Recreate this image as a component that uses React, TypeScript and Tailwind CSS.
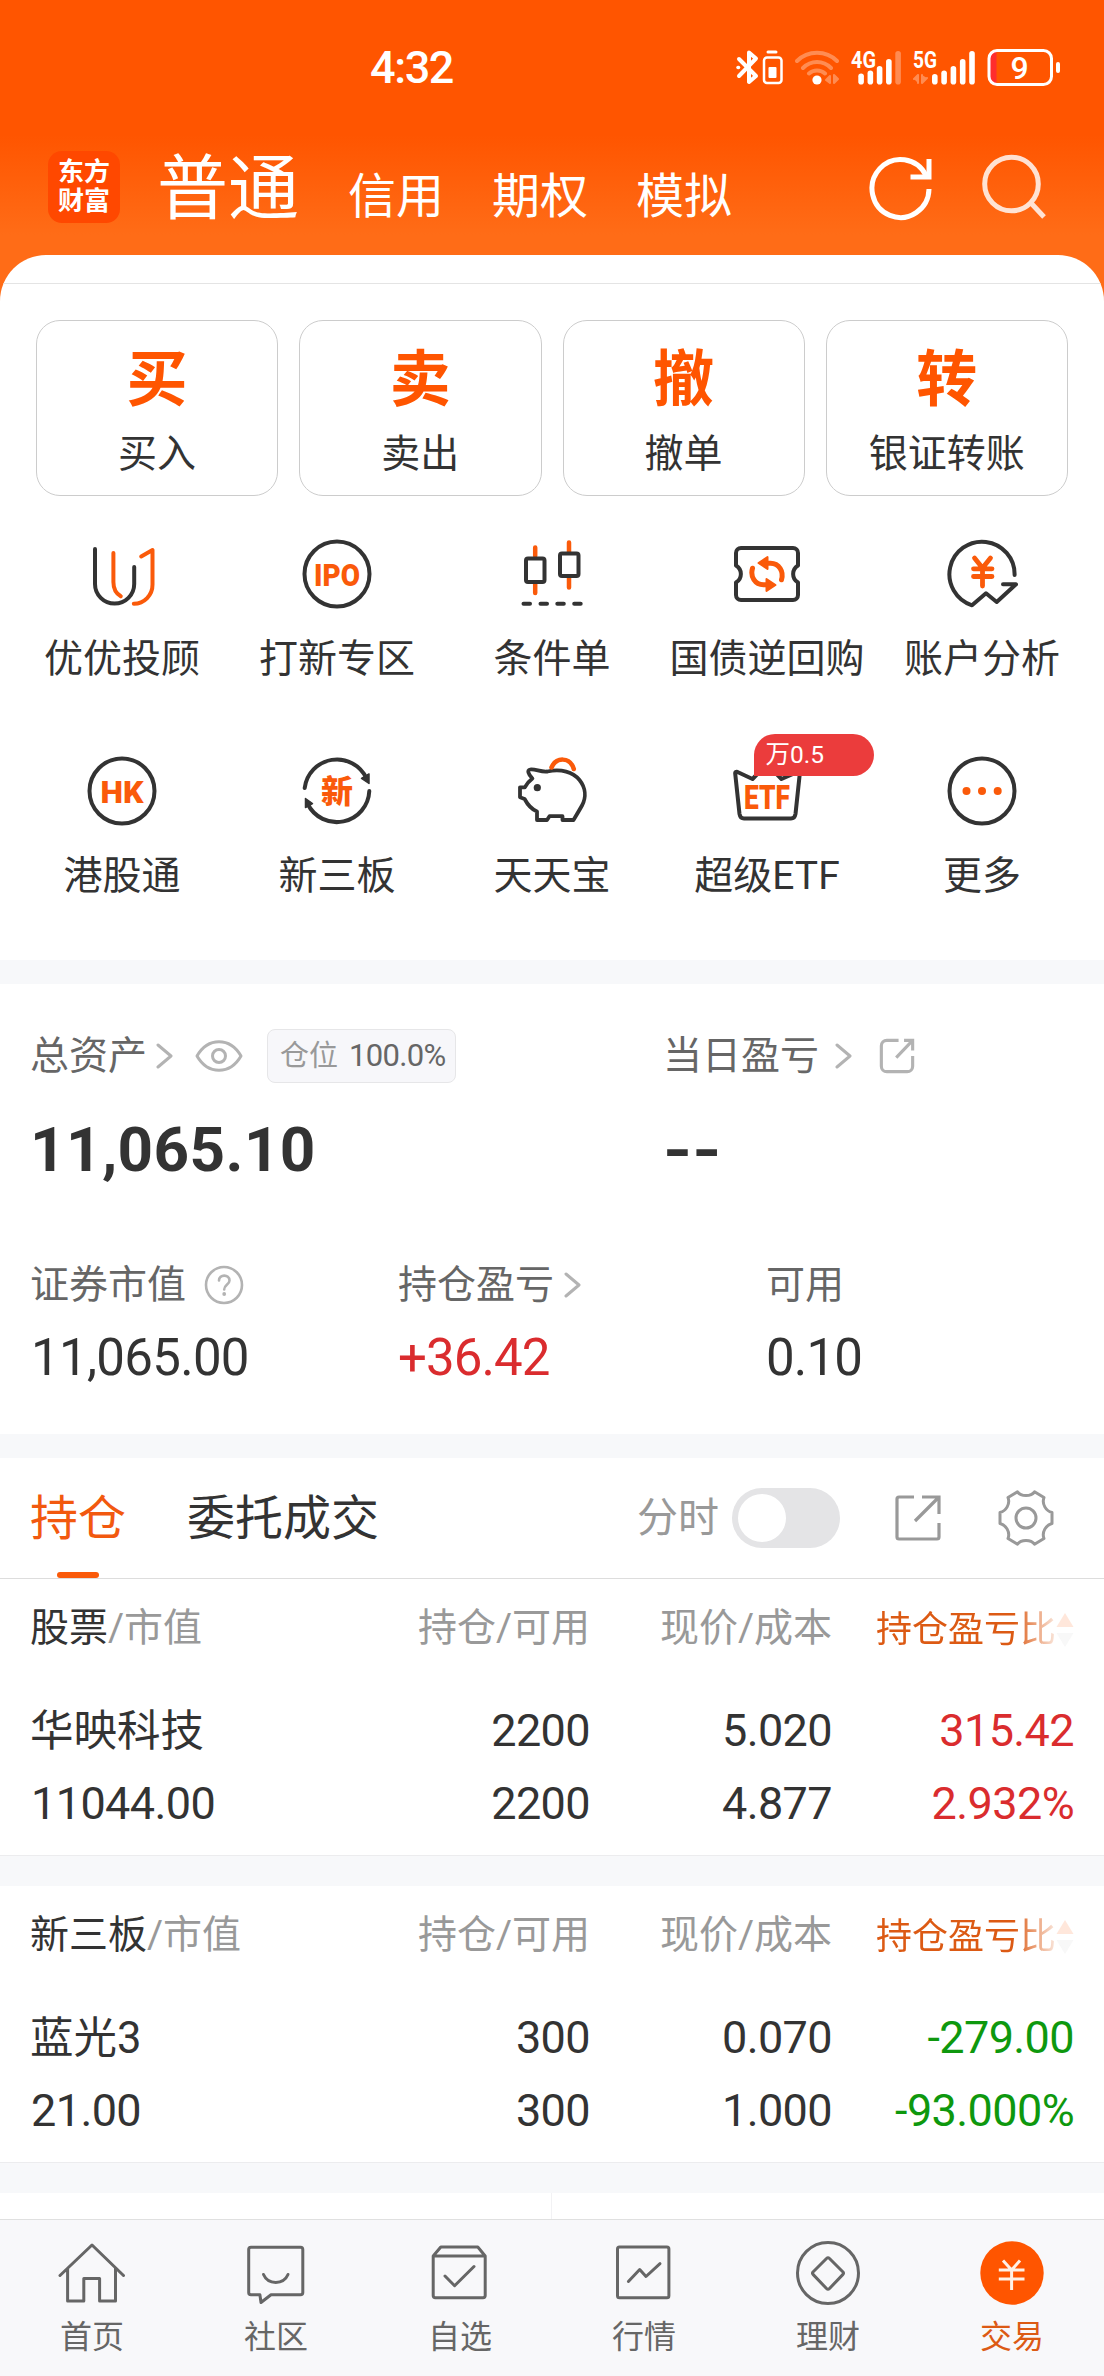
import type { ReactNode } from 'react';

const DARK = '#333333';
const ORANGE = '#fa5a0a';

interface IconProps {
  children: ReactNode;
  color?: string;
  width?: number;
}

function Icon({ children, color = DARK, width = 4 }: IconProps) {
  return (
    <svg
      width="72"
      height="72"
      viewBox="0 0 72 72"
      fill="none"
      stroke={color}
      strokeWidth={width}
      strokeLinecap="round"
      strokeLinejoin="round"
    >
      {children}
    </svg>
  );
}

function IconText({ children, y, size, length }: { children: string; y: number; size: number; length: number }) {
  return (
    <text
      x="36"
      y={y}
      textAnchor="middle"
      fontSize={size}
      fontWeight="900"
      textLength={length}
      lengthAdjust="spacingAndGlyphs"
      fill={ORANGE}
      stroke="none"
    >
      {children}
    </text>
  );
}

function Chevron() {
  return (
    <svg width="17" height="28" viewBox="0 0 17 28" fill="none" stroke="#b3b3b3" strokeWidth="3" strokeLinecap="round" strokeLinejoin="round">
      <path d="M2 3l13 11L2 25" />
    </svg>
  );
}

function ShareIcon({ size, color, rounded }: { size: number; color: string; rounded?: boolean }) {
  return (
    <svg width={size} height={size} viewBox="0 0 46 46" fill="none" stroke={color} strokeWidth={rounded ? 4 : 3.2}>
      <path
        d={
          rounded
            ? 'M25 3H10a7 7 0 0 0-7 7v26a7 7 0 0 0 7 7h26a7 7 0 0 0 7-7V23M32 3h11v13M43 3L22 25'
            : 'M19 2H4a2 2 0 0 0-2 2v38a2 2 0 0 0 2 2h38a2 2 0 0 0 2-2V28M27 2h17v17M44 2L20 26'
        }
      />
    </svg>
  );
}

const actions = [
  { glyph: '买', label: '买入' },
  { glyph: '卖', label: '卖出' },
  { glyph: '撤', label: '撤单' },
  { glyph: '转', label: '银证转账' },
];

const shortcuts: { label: string; badge?: string; icon: ReactNode }[] = [
  {
    label: '优优投顾',
    icon: (
      <Icon>
        <path d="M9 11V46A19.6 19.6 0 0 0 48.2 46V29" />
        <path stroke={ORANGE} d="M27.4 15V44C27.4 51 30 55.5 34.8 58.3M55.2 18.5L66.5 12V46.5A19 19 0 0 1 47.8 65.8" />
      </Icon>
    ),
  },
  {
    label: '打新专区',
    icon: (
      <Icon>
        <circle cx="36" cy="36" r="32.5" />
        <IconText y={47.5} size={32} length={46}>IPO</IconText>
      </Icon>
    ),
  },
  {
    label: '条件单',
    icon: (
      <Icon>
        <path stroke={ORANGE} strokeWidth="4.5" d="M19.2 9.5V18M19.2 46v9M53 4.5V14M53 40v9.5" />
        <rect x="10" y="20.5" width="18.5" height="23.5" rx="2" />
        <rect x="44" y="15.5" width="18.5" height="22.5" rx="2" />
        <path d="M7.5 65.7h6.5M24.5 65.7h6.5M41.3 65.7h6.5M58.2 65.7h6.5" />
      </Icon>
    ),
  },
  {
    label: '国债逆回购',
    icon: (
      <Icon>
        <path d="M5 15a5 5 0 0 1 5-5H62a5 5 0 0 1 5 5V27.5c-6.5 4-6.5 13 0 17V57a5 5 0 0 1-5 5H10a5 5 0 0 1-5-5V44.5c6.5-4 6.5-13 0-17Z" />
        <g stroke={ORANGE} strokeWidth="5">
          <path d="M36 25.3h3.5c8.5 0 13.5 8 11 16.5" />
          <path d="M36 46.7h-3.5c-8.5 0-13.5-8-11-16.5" />
          <path strokeWidth="2" fill={ORANGE} d="M27.5 25L36.5 19V31Z" />
          <path strokeWidth="2" fill={ORANGE} d="M44.5 47L35.5 53V41Z" />
        </g>
      </Icon>
    ),
  },
  {
    label: '账户分析',
    icon: (
      <Icon>
        <path d="M68.6 37A32.6 32.6 0 1 0 26 67.3L40 55.3L50.7 64L70 46.3H57" />
        <path stroke={ORANGE} strokeWidth="4.8" d="M28.5 20L36.5 30L44.5 20M36.5 31V48M27.5 30.8H46M27.5 38.5H46" />
      </Icon>
    ),
  },
  {
    label: '港股通',
    icon: (
      <Icon>
        <circle cx="36" cy="36" r="32.5" />
        <IconText y={47.5} size={32} length={43}>HK</IconText>
      </Icon>
    ),
  },
  {
    label: '新三板',
    icon: (
      <Icon>
        <path d="M3.7 33A32.5 32.5 0 0 1 65.3 23M68.3 36A32.5 32.5 0 0 1 6.7 49" />
        <path strokeWidth="1.5" fill={DARK} d="M60.5 23.5L68 19V28.5ZM4.5 43.5V52.5L11.5 48.5Z" />
        <text x="36" y="47.5" textAnchor="middle" fontSize="32" fontWeight="900" fill={ORANGE} stroke="none">
          新
        </text>
      </Icon>
    ),
  },
  {
    label: '天天宝',
    icon: (
      <Icon width={3.8}>
        <path d="M16.4 23.5C12 19 11 15 14 14.5C19 13.5 25 17.5 31.5 16.5C45 13.5 57 17 63.5 25C69.5 32.5 70.5 42 66 50.5C63.5 55 60.5 60 57.5 65H46.5V61.2H33.5L31 65H21V56.5C15 54 11.5 49.5 8.6 44L4 42.3V32.3H8.8C10.5 29 12.5 26.5 16.4 23.5Z" />
        <circle cx="21.3" cy="32.7" r="3.6" fill={DARK} stroke="none" />
        <path stroke={ORANGE} strokeWidth="4.5" d="M35.5 12.5C40 2 54 1.5 57.8 14" />
      </Icon>
    ),
  },
  {
    label: '超级ETF',
    badge: '万0.5',
    icon: (
      <Icon>
        <path d="M4.2 18.5C4 17 5 16.5 6.5 17L21.5 24L36 9L50.5 24L66.5 17C68 16.5 69 17 68.8 18.5L64.5 59C64 62 62.5 63.5 60 63.5H13C10.5 63.5 9 62 8.5 59Z" />
        <IconText y={54} size={33} length={46}>ETF</IconText>
      </Icon>
    ),
  },
  {
    label: '更多',
    icon: (
      <Icon>
        <circle cx="36" cy="36" r="32.5" />
        <g fill={ORANGE} stroke="none">
          <circle cx="20.5" cy="36" r="4" />
          <circle cx="36" cy="36" r="4" />
          <circle cx="51.7" cy="36" r="4" />
        </g>
      </Icon>
    ),
  },
];

const holdings = [
  {
    market: '股票',
    name: '华映科技',
    value: '11044.00',
    held: '2200',
    available: '2200',
    price: '5.020',
    cost: '4.877',
    profit: '315.42',
    ratio: '2.932%',
    color: 'text-[#da2c2e]',
  },
  {
    market: '新三板',
    name: '蓝光3',
    value: '21.00',
    held: '300',
    available: '300',
    price: '0.070',
    cost: '1.000',
    profit: '-279.00',
    ratio: '-93.000%',
    color: 'text-[#0e980e]',
  },
];

const navItems: { label: string; icon: ReactNode; active?: boolean }[] = [
  {
    label: '首页',
    icon: <path d="M4 38.5L36 8L67.5 38.5M11.6 31.5V64H27.8V41.5H43.6V64H59.5V31.5" />,
  },
  {
    label: '社区',
    icon: (
      <>
        <path d="M11 10.3H60.5a2.3 2.3 0 0 1 2.3 2.3V55.4a2.3 2.3 0 0 1-2.3 2.3H31L21 65.5L19.9 57.7H11a2.3 2.3 0 0 1-2.3-2.3V12.6A2.3 2.3 0 0 1 11 10.3Z" />
        <path d="M23.5 37.5C28 48 43.5 48 48 37.5" />
      </>
    ),
  },
  {
    label: '自选',
    icon: <path d="M9.2 19L16.8 10H53.8L61.2 19V58.5a2.2 2.2 0 0 1-2.2 2.2H11.4a2.2 2.2 0 0 1-2.2-2.2ZM9.2 19H61.2M21 39L30.6 48.7L50 29.5" />,
  },
  {
    label: '行情',
    icon: (
      <>
        <rect x="9.5" y="10" width="51.4" height="50.7" rx="2" />
        <path d="M20.4 44.5L31.7 32.5L38 39.5L52 26.7" />
      </>
    ),
  },
  {
    label: '理财',
    icon: (
      <>
        <circle cx="36" cy="36" r="30.5" />
        <path d="M34.5 21.5Q36 20 37.5 21.5L51 35Q52 36.2 51 37.4L37.5 51.5Q36 53 34.5 51.5L21 37.4Q20 36.2 21 35Z" />
      </>
    ),
  },
  {
    label: '交易',
    active: true,
    icon: (
      <>
        <circle cx="36" cy="36" r="31.7" fill="#ff5500" stroke="none" />
        <path stroke="#fff1e6" d="M27 23.5L35.6 33L44 23.5M35.6 33V53M22.8 33H48.5M22.8 42H48.5" strokeLinecap="butt" />
      </>
    ),
  },
];

function StatusBar() {
  const bars4g = [73.5, 70.5, 66, 59, 51];
  const bars5g = [74, 70.5, 66, 59, 51];
  return (
    <div className="flex h-[135px] items-start pl-[370px] pt-[45px] text-white">
      <span className="w-[360px] text-[45px] font-medium leading-[46px] tracking-[-1.4px]">4:32</span>
      <svg width="336" height="46" viewBox="730 45 336 46" fill="none" stroke="white" strokeLinecap="round" strokeLinejoin="round">
        <path strokeWidth="4" d="M739 59L756 76L749 82V52.5L756 58.5L739 76" />
        <path strokeWidth="3.5" d="M738 67.5h.5" />
        <path strokeWidth="3" d="M768 52h8" />
        <rect x="764" y="57.5" width="17.5" height="25.5" rx="3" strokeWidth="2.5" />
        <rect x="768.5" y="67" width="8" height="11" rx="1" fill="white" stroke="none" />
        <g strokeWidth="4" opacity="0.32">
          <path d="M797 61C808 50 826 50 837 61M803 68C811 60 823 60 831 68M809 73.5C813.5 69.5 820.5 69.5 825 73.5" />
          <path strokeWidth="2" fill="white" d="M826 80l4-4v7ZM838 79l-4-4v8Z" />
        </g>
        <circle cx="817" cy="80" r="4.6" fill="white" stroke="none" />
        <g fill="white" stroke="none" fontSize="24" fontWeight="700">
          <text x="851" y="68" textLength="25" lengthAdjust="spacingAndGlyphs">4G</text>
          <text x="913" y="68" textLength="24" lengthAdjust="spacingAndGlyphs">5G</text>
        </g>
        <g fill="white" stroke="none">
          {bars4g.map((top, i) => (
            <rect key={i} x={858.3 + i * 9.25} y={top} width="5.6" height={84.5 - top} rx="2.8" opacity={i === 4 ? 0.32 : 1} />
          ))}
          {bars5g.map((top, i) => (
            <rect key={i} x={932 + i * 9.3} y={top} width="5.6" height={84.5 - top} rx="2.8" />
          ))}
        </g>
        <path strokeWidth="2" opacity="0.32" fill="white" d="M914 79l4-4v8M922 75v8l5-5" />
        <path fill="#ff2d2d" stroke="none" d="M996.5 51.5h-1a6 6 0 0 0-6 6v20a6 6 0 0 0 6 6h1Z" />
        <rect x="989" y="50.5" width="62.5" height="34" rx="8" strokeWidth="3" />
        <path strokeWidth="4" d="M1058 64v7" />
        <text x="1019.5" y="79" textAnchor="middle" fontSize="32" fontWeight="500" fill="white" stroke="none">
          9
        </text>
      </svg>
    </div>
  );
}

function Header() {
  return (
    <header className="h-[255px] bg-[linear-gradient(180deg,#ff5500_0px,#ff5500_135px,#ff6c17_235px,#ff6c17_255px)] text-white">
      <StatusBar />
      <div className="flex h-[104px] items-center pl-12">
        <div className="flex h-[72px] w-[72px] flex-col items-center justify-center rounded-[14px] bg-[#ff4800] text-[26px] font-bold leading-[29px]">
          <span>东方</span>
          <span>财富</span>
        </div>
        <div className="ml-[37px] flex w-[712px] items-baseline pt-[12px] text-[48px] leading-[72px]">
          <span className="mr-[49px] text-[71px]">普通</span>
          <span className="mr-12">信用</span>
          <span className="mr-12">期权</span>
          <span>模拟</span>
        </div>
        <svg width="180" height="70" viewBox="868 152 180 70" fill="none" stroke="white" strokeWidth="5">
          <path d="M928 189A28.5 29 0 1 1 925 175.5" />
          <path d="M928 159V177H909.5" />
          <g opacity="0.82">
            <circle cx="1010.5" cy="184" r="26.8" />
            <path d="M1030 203L1043 217" />
          </g>
        </svg>
      </div>
    </header>
  );
}

function QuickActions() {
  return (
    <div className="bg-[#ff6c17]">
      <section className="h-[705px] overflow-hidden rounded-t-[46px] bg-white pt-7">
        <div className="h-px bg-[#e4e4e4]" />
        <div className="mt-9 grid grid-cols-4 gap-[21px] px-9">
          {actions.map((item) => (
            <div key={item.label} className="flex h-44 flex-col items-center rounded-[24px] border border-[#cccccc] pt-[29px]">
              <span className="text-[61px] font-bold leading-[60px] text-[#ff5500]">{item.glyph}</span>
              <span className="mt-[24px] text-[39px] leading-[40px]">{item.label}</span>
            </div>
          ))}
        </div>
        <div className="mt-[42px] grid grid-cols-5 gap-y-[76px] px-[14.5px]">
          {shortcuts.map((item) => (
            <div key={item.label} className="relative flex flex-col items-center">
              {item.icon}
              <span className="mt-[29px] whitespace-nowrap text-[39px] leading-[40px]">{item.label}</span>
              {item.badge && (
                <span className="absolute -top-[21px] left-[94px] h-[42px] w-[120px] rounded-full rounded-bl-none bg-[#eb3c3c] pl-3 text-[24.5px] leading-[42px] text-white">
                  {item.badge}
                </span>
              )}
            </div>
          ))}
        </div>
      </section>
    </div>
  );
}

function Assets() {
  return (
    <section className="h-[450px] bg-white pl-[30px] pt-[45px] text-[39px] leading-[40px] text-[#666666]">
      <div className="grid grid-cols-[633px_1fr]">
        <div>
          <div className="flex h-[54px] items-center">
            <span>总资产</span>
            <div className="ml-[9px] flex">
              <Chevron />
            </div>
            <svg className="ml-[22px]" width="48" height="34" viewBox="0 0 48 34" fill="none" stroke="#b3b3b3" strokeWidth="3">
              <path d="M2 17C13-2 35-2 46 17C35 36 13 36 2 17Z" strokeLinejoin="round" />
              <circle cx="24" cy="17" r="6.5" />
            </svg>
            <div className="ml-[24px] flex h-[54px] w-[189px] items-center rounded-lg border border-[#e6e6e8] bg-[#f7f7fa] pl-3 text-[29px]">
              <span className="text-[#999999]">仓位</span>
              <span className="ml-[11px] text-[31px] tracking-[-0.7px]">100.0%</span>
            </div>
          </div>
          <div className="mt-[36px] text-[62px] font-bold leading-[62px] tracking-[0.4px] text-[#333333]">11,065.10</div>
        </div>
        <div>
          <div className="flex h-[54px] items-center">
            <span>当日盈亏</span>
            <div className="ml-[16px] flex">
              <Chevron />
            </div>
            <div className="ml-[27px]">
              <ShareIcon size={36} color="#b3b3b3" rounded />
            </div>
          </div>
          <div className="mt-[36px] w-fit origin-left scale-x-[1.2] text-[62px] font-bold leading-[62px] text-[#333333]">--</div>
        </div>
      </div>
      <div className="mt-[84px] grid grid-cols-[368px_368px_1fr]">
        <div>
          <div className="flex h-10 items-center">
            <span>证券市值</span>
            <svg className="ml-[18px]" width="40" height="40" viewBox="0 0 40 40" fill="none" stroke="#b3b3b3" strokeWidth="2.6">
              <circle cx="20" cy="20" r="18" />
              <path d="M15 15.5C15 9 25.5 9 25.5 15.5C25.5 19.5 20.2 19.5 20.2 24.5" strokeLinecap="round" />
              <circle cx="20.2" cy="29" r="1.9" fill="#b3b3b3" stroke="none" />
            </svg>
          </div>
          <div className="mt-[27px] pl-px text-[51px] leading-[52px] tracking-[-0.7px] text-[#333333]">11,065.00</div>
        </div>
        <div>
          <div className="flex h-10 items-center">
            <span>持仓盈亏</span>
            <div className="ml-[10px] flex">
              <Chevron />
            </div>
          </div>
          <div className="mt-[27px] text-[51px] leading-[52px] tracking-[-0.9px] text-[#da2c2e]">+36.42</div>
        </div>
        <div>
          <div className="h-10">可用</div>
          <div className="mt-[27px] text-[51px] leading-[52px] tracking-[-0.8px] text-[#333333]">0.10</div>
        </div>
      </div>
    </section>
  );
}

function HoldingTabs() {
  return (
    <div className="flex h-[121px] items-center border-b border-[#dddddd] bg-white pl-[30px] text-[48px]">
      <div className="relative flex h-[120px] items-center pt-[2px] text-[#f2590f]">
        <span>持仓</span>
        <div className="absolute bottom-0 left-[27px] h-1.5 w-[42px] rounded-full bg-[#fa5a0a]" />
      </div>
      <span className="ml-[61px] pt-[2px]">委托成交</span>
      <span className="ml-[258px] pt-[2px] text-[41px] text-[#999999]">分时</span>
      <div className="ml-[13px] flex h-[60px] w-[108px] items-center rounded-full bg-[#e4e4e6] pl-1.5">
        <div className="h-12 w-12 rounded-full bg-white" />
      </div>
      <div className="ml-[55px]">
        <ShareIcon size={46} color="#999999" />
      </div>
      <svg className="ml-[56px]" width="58" height="58" viewBox="0 0 58 58" fill="none" stroke="#999999" strokeWidth="3" strokeLinejoin="round">
        <path d="M20.5 2.8C24 7.8 34 7.8 37.5 2.8L47 8.5C44.5 15 49 22 55 23.5V34.5C49 36 44.5 43 47 49.5L37.5 55.2C34 50.2 24 50.2 20.5 55.2L11 49.5C13.5 43 9 36 3 34.5V23.5C9 22 13.5 15 11 8.5Z" />
        <circle cx="29" cy="29" r="10" />
      </svg>
    </div>
  );
}

function HoldingTable({ item }: { item: (typeof holdings)[number] }) {
  return (
    <section className="h-[276px] bg-white px-[30px] pt-[29px]">
      <div className="grid grid-cols-[318px_242px_242px_242px] text-right text-[39px] leading-[40px] text-[#999999]">
        <div className="text-left">
          <span className="text-[#333333]">{item.market}</span>/市值
        </div>
        <div>持仓/可用</div>
        <div>现价/成本</div>
        <div className="flex items-center whitespace-nowrap pl-[44px] pt-[2px] text-[36px] text-[#dc5a14] [mask-image:linear-gradient(90deg,black_0px,black_182px,rgba(0,0,0,0.14)_224px)]">
          持仓盈亏比
          <svg className="shrink-0" width="18" height="36" viewBox="0 0 18 36">
            <path fill="#ff5500" d="M9 1L17.5 15H.5Z" />
            <path fill="#cccccc" d="M9 35L17.5 21H.5Z" />
          </svg>
        </div>
      </div>
      <div className="mt-[58px] grid grid-cols-[318px_242px_242px_242px] gap-y-[26px] text-right text-[45px] leading-[46px] tracking-[-0.6px]">
        <div className="pt-px text-left text-[43.5px] tracking-normal">{item.name}</div>
        <div>{item.held}</div>
        <div>{item.price}</div>
        <div className={item.color}>{item.profit}</div>
        <div className="pl-px text-left">{item.value}</div>
        <div>{item.available}</div>
        <div>{item.cost}</div>
        <div className={item.color}>{item.ratio}</div>
      </div>
    </section>
  );
}

function BottomNav() {
  return (
    <nav className="grid h-[157px] grid-cols-6 border-t border-[#e0e0e0] bg-[#f8f8fa] pt-[17px]">
      {navItems.map((item) => (
        <div key={item.label} className="flex flex-col items-center">
          <Icon color="#666666" width={3}>
            {item.icon}
          </Icon>
          <span className={`mt-3 text-[32px] leading-[32px] ${item.active ? 'text-[#dc5a14]' : 'text-[#666666]'}`}>
            {item.label}
          </span>
        </div>
      ))}
    </nav>
  );
}

export default function App() {
  return (
    <div className="w-[1104px] bg-[#f7f8fa] font-[Roboto,'Noto_Sans_CJK_SC',sans-serif] text-[#333333]">
      <Header />
      <QuickActions />
      <div className="h-6" />
      <Assets />
      <div className="h-6" />
      <HoldingTabs />
      {holdings.map((item) => (
        <div key={item.market}>
          <HoldingTable item={item} />
          <div className="h-[31px] border-t border-[#ececee]" />
        </div>
      ))}
      <div className="grid h-[26px] grid-cols-2 bg-white">
        <div className="border-r border-[#f2f2f4]" />
      </div>
      <BottomNav />
    </div>
  );
}
